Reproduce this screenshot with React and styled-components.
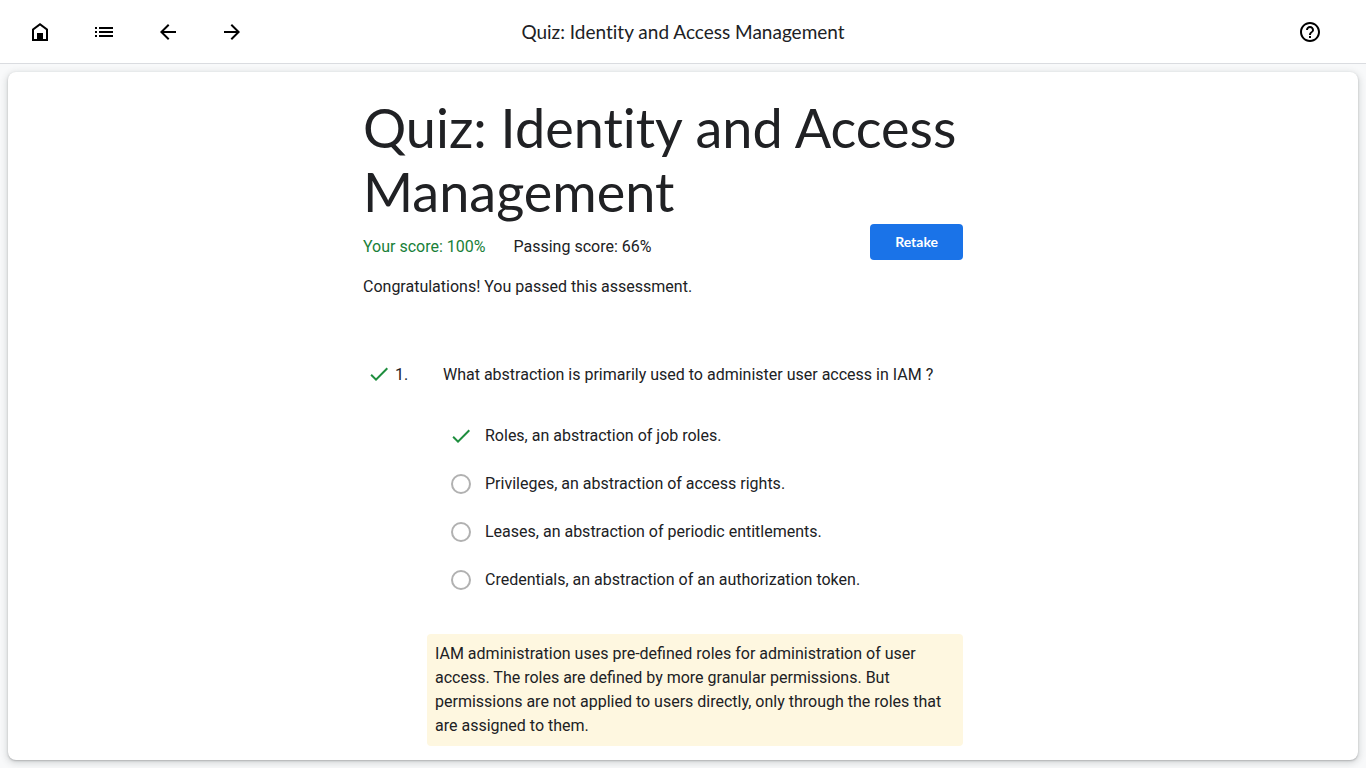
import React from "react";
import styled, { createGlobalStyle } from "styled-components";

const GlobalStyle = createGlobalStyle`
  *, *::before, *::after { box-sizing: border-box; }
  body {
    margin: 0;
    background: #f8f9fa;
    color: #202124;
    font-family: Roboto, sans-serif;
    font-size: 16px;
    line-height: 24px;
  }
`;

const Page = styled.div`
  min-height: 100vh;
  display: flex;
  flex-direction: column;
`;

const TopBar = styled.header`
  display: grid;
  grid-template-columns: 1fr auto 1fr;
  align-items: center;
  height: 64px;
  padding: 0 16px;
  background: #fff;
  border-bottom: 1px solid #dadce0;
`;

const Nav = styled.nav`
  display: flex;
  gap: 16px;
`;

const iconControl = `
  display: flex;
  align-items: center;
  justify-content: center;
  width: 48px;
  height: 48px;
  padding: 0;
  border: 0;
  background: none;
  color: #000;
  cursor: pointer;
`;

const IconLink = styled.a`
  ${iconControl}
`;

const IconButton = styled.button`
  ${iconControl}
  justify-self: end;
  margin-right: 16px;
`;

const BarTitle = styled.div`
  font-family: "Google Sans", Lato, sans-serif;
  font-size: 19px;
  line-height: 24px;
  font-variant-ligatures: none;
`;

const Card = styled.main`
  flex: 1;
  margin: 8px;
  padding: 24px 16px 12px;
  background: #fff;
  border-radius: 8px;
  box-shadow: 0 1px 2px rgba(60, 64, 67, 0.3), 0 2px 6px 2px rgba(60, 64, 67, 0.15);
`;

const Content = styled.div`
  max-width: 640px;
  margin: 0 auto;
  padding-right: 40px;
`;

const Title = styled.h1`
  margin: 0;
  font-family: "Google Sans", Lato, sans-serif;
  font-size: 54px;
  font-weight: 400;
  line-height: 64px;
  font-variant-ligatures: none;
`;

const ScoreRow = styled.div`
  display: flex;
  align-items: center;
  gap: 28px;
  height: 36px;
  margin-bottom: 14px;
`;

const Score = styled.span`
  padding-top: 10px;
  line-height: 26px;
  color: ${(p) => (p.$passed ? "#188038" : "inherit")};
`;

const RetakeButton = styled.button`
  margin-left: auto;
  height: 36px;
  padding: 0 25px;
  border: 0;
  border-radius: 4px;
  background: #1a73e8;
  color: #fff;
  font-family: "Google Sans", Lato, sans-serif;
  font-size: 14px;
  font-weight: 700;
  line-height: 36px;
  cursor: pointer;
`;

const Result = styled.p`
  margin: 0 0 62px;
  line-height: 26px;
`;

const Question = styled.fieldset`
  min-width: 0;
  margin: 0;
  padding: 0;
  border: 0;
`;

const Prompt = styled.legend`
  display: flex;
  width: 100%;
  padding: 0 0 0 4px;
  line-height: 26px;
`;

const Number = styled.span`
  width: 48px;
  margin-left: 4px;
`;

const Options = styled.div`
  padding: 24px 0 30px 86px;
`;

const Option = styled.label`
  display: flex;
  align-items: center;
  gap: 12px;
  height: 48px;
`;

const Mark = styled.span`
  display: flex;
  align-items: center;
  justify-content: center;
  width: 24px;
  height: 24px;
`;

const Radio = styled.input`
  appearance: none;
  width: 20px;
  height: 20px;
  margin: 0;
  border: 2px solid #b1b1b1;
  border-radius: 50%;
`;

const CorrectRadio = styled.input`
  appearance: none;
  width: 0;
  height: 0;
  margin: 0;
`;

const Explanation = styled.p`
  margin: 0 0 0 64px;
  padding: 8px;
  border-radius: 4px;
  background: #fef7e0;
`;

const Svg = styled.svg`
  flex: none;
  width: 24px;
  height: 24px;
  fill: ${(p) => p.$color || "currentColor"};
`;

const paths = {
  home: "M6 19h3v-6h6v6h3v-9l-6-4.5L6 10v9zm-2 2V9l8-6 8 6v12H4zM9 13h6v7H9z",
  list: "M3 13h2v-2H3v2zm0 4h2v-2H3v2zm0-8h2V7H3v2zm4 4h14v-2H7v2zm0 4h14v-2H7v2zM7 7v2h14V7H7z",
  back: "M20 11H7.83l5.59-5.59L12 4l-8 8 8 8 1.41-1.41L7.83 13H20v-2z",
  forward: "M12 4l-1.41 1.41L16.17 11H4v2h12.17l-5.58 5.59L12 20l8-8z",
  help: "M11 18h2v-2h-2v2zm1-16C6.48 2 2 6.48 2 12s4.480 10 10 10 10-4.480 10-10S17.520 2 12 2zm0 18c-4.410 0-8-3.590-8-8s3.590-8 8-8 8 3.590 8 8-3.590 8-8 8zm0-14c-2.210 0-4 1.790-4 4h2c0-1.100.9-2 2-2s2 .9 2 2c0 2-3 1.750-3 5h2c0-2.250 3-2.500 3-5 0-2.210-1.790-4-4-4z",
  check: "M9 16.17L4.830 12l-1.420 1.410L9 19 21 7l-1.410-1.410z",
};

function Icon({ name, color }) {
  return (
    <Svg viewBox="0 0 24 24" aria-hidden="true" $color={color}>
      <path d={paths[name]} />
    </Svg>
  );
}

const links = [
  ["home", "Home"],
  ["list", "Course outline"],
  ["back", "Previous"],
  ["forward", "Next"],
];

const options = [
  { text: "Roles, an abstraction of job roles.", correct: true },
  { text: "Privileges, an abstraction of access rights." },
  { text: "Leases, an abstraction of periodic entitlements." },
  { text: "Credentials, an abstraction of an authorization token." },
];

export default function App() {
  return (
    <Page>
      <GlobalStyle />
      <TopBar>
        <Nav>
          {links.map(([name, label]) => (
            <IconLink key={name} href="#" aria-label={label}>
              <Icon name={name} />
            </IconLink>
          ))}
        </Nav>
        <BarTitle>Quiz: Identity and Access Management</BarTitle>
        <IconButton type="button" aria-label="Help">
          <Icon name="help" />
        </IconButton>
      </TopBar>
      <Card>
        <Content>
          <Title>Quiz: Identity and Access Management</Title>
          <ScoreRow>
            <Score $passed>Your score: 100%</Score>
            <Score>Passing score: 66%</Score>
            <RetakeButton type="button">Retake</RetakeButton>
          </ScoreRow>
          <Result>Congratulations! You passed this assessment.</Result>
          <Question>
            <Prompt>
              <Icon name="check" color="#1e8e3e" />
              <Number>1.</Number>
              <span>What abstraction is primarily used to administer user access in IAM ?</span>
            </Prompt>
            <Options>
              {options.map(({ text, correct }) => (
                <Option key={text}>
                  <Mark>
                    {correct ? (
                      <>
                        <CorrectRadio type="radio" name="question-1" defaultChecked />
                        <Icon name="check" color="#1e8e3e" />
                      </>
                    ) : (
                      <Radio type="radio" name="question-1" disabled />
                    )}
                  </Mark>
                  {text}
                </Option>
              ))}
            </Options>
            <Explanation>
              IAM administration uses pre-defined roles for administration of user access. The roles
              are defined by more granular permissions. But permissions are not applied to users
              directly, only through the roles that are assigned to them.
            </Explanation>
          </Question>
        </Content>
      </Card>
    </Page>
  );
}
